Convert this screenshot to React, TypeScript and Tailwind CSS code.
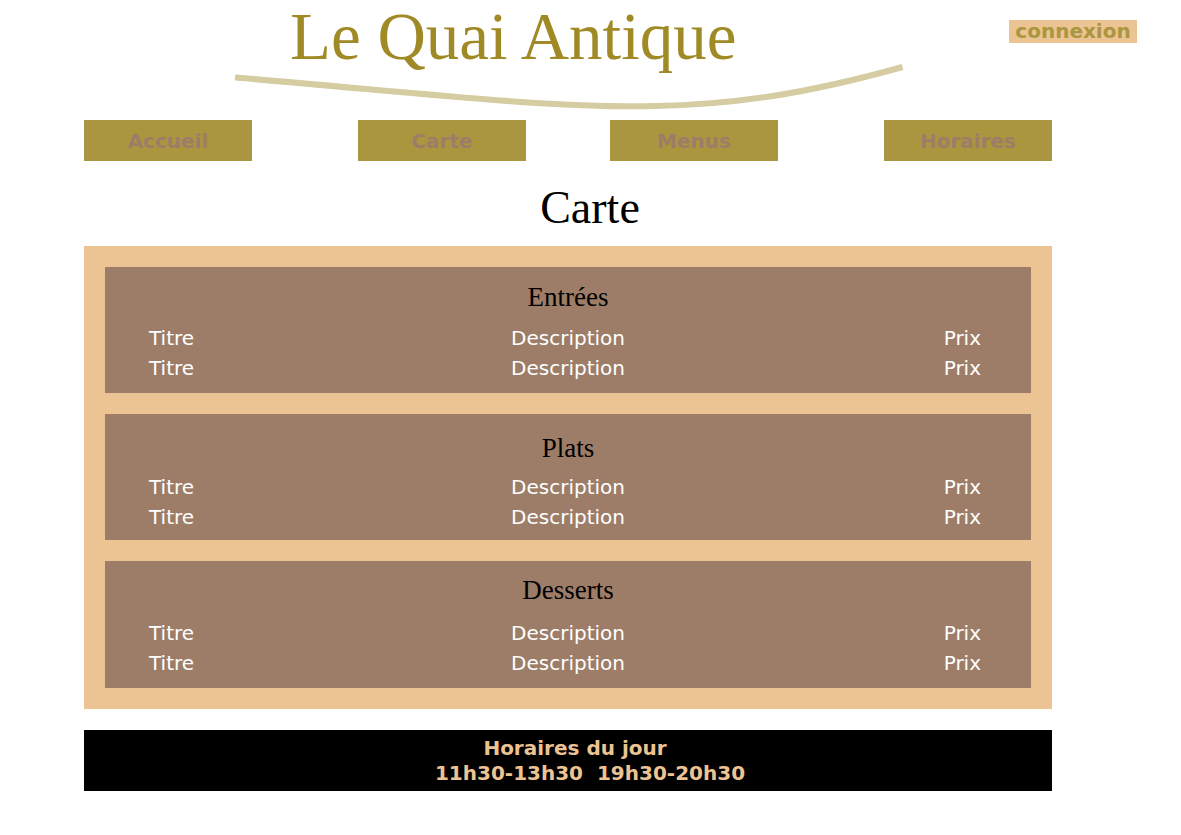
type Dish = { title: string; description: string; price: string };

type Section = {
  name: string;
  headingClass: string;
  bodyClass: string;
  dishes: Dish[];
};

const dish: Dish = { title: "Titre", description: "Description", price: "Prix" };

const sections: Section[] = [
  { name: "Entrées", headingClass: "pt-3.5 pb-2.5", bodyClass: "pb-2.5", dishes: [dish, dish] },
  { name: "Plats", headingClass: "pt-4.5 pb-2", bodyClass: "pb-2", dishes: [dish, dish] },
  { name: "Desserts", headingClass: "pt-[13px] pb-3", bodyClass: "pb-2.5", dishes: [dish, dish] },
];

const navGroups = [
  ["Accueil", "Carte"],
  ["Menus", "Horaires"],
];

const serif = "font-['Liberation_Serif',serif]";

function Header() {
  return (
    <header className="flex items-start pl-[129px] pr-[44px]">
      <div className="flex flex-1 justify-center">
        <div className="w-[668px]">
          <p className={`${serif} pl-[55px] text-[67px] leading-[72px] whitespace-nowrap text-[#a08a26]`}>
            Le Quai Antique
          </p>
          <svg
            className="-mt-3 block h-13 w-full overflow-visible"
            viewBox="0 0 668 52"
            fill="none"
            aria-hidden="true"
          >
            <path d="M0 17.5 C345 46.5 448 68.5 667.5 7" stroke="#d5cca1" strokeWidth="6" />
          </svg>
        </div>
      </div>
      <button
        type="button"
        className="mt-5 w-32 bg-[#ecc392] text-center text-[20px] leading-[23px] font-bold text-[#aa963f]"
      >
        connexion
      </button>
    </header>
  );
}

function Navigation() {
  return (
    <nav className="mt-2 flex justify-between">
      {navGroups.map((group) => (
        <div key={group[0]} className="flex gap-[106px]">
          {group.map((label) => (
            <a
              key={label}
              href={`#${label.toLowerCase()}`}
              className="w-[168px] bg-[#aa963f] pt-0.5 text-center text-[20px] leading-[39px] font-bold text-[#9d7d67]"
            >
              {label}
            </a>
          ))}
        </div>
      ))}
    </nav>
  );
}

function MenuSection({ section }: { section: Section }) {
  const id = `section-${section.name.toLowerCase()}`;
  return (
    <section className="bg-[#9d7d67] px-11">
      <h2
        id={id}
        className={`${serif} ${section.headingClass} text-center text-[27px] leading-8 text-black`}
      >
        {section.name}
      </h2>
      <div className={section.bodyClass}>
        <table
          aria-labelledby={id}
          className="w-full table-fixed border-collapse text-[20px] leading-[30px] text-white"
        >
          <tbody>
            {section.dishes.map((item, index) => (
              <tr key={index}>
                <td className="p-0 text-left">{item.title}</td>
                <td className="p-0 text-center">{item.description}</td>
                <td className="p-0 pr-1.5 text-right">{item.price}</td>
              </tr>
            ))}
          </tbody>
        </table>
      </div>
    </section>
  );
}

export default function App() {
  return (
    <div className="min-h-screen bg-white pb-10 font-['DejaVu_Sans',sans-serif]">
      <Header />
      <div className="pl-[84px] pr-[129px]">
        <Navigation />
        <main>
          <h1 className={`${serif} mt-[21px] pl-11 text-center text-[46px] leading-[52px] text-black`}>
            Carte
          </h1>
          <div className="mt-3 flex flex-col gap-[21px] bg-[#ecc392] p-[21px]">
            {sections.map((section) => (
              <MenuSection key={section.name} section={section} />
            ))}
          </div>
        </main>
        <footer className="mt-[21px] bg-black pt-1.5 pb-[5px] pl-11 text-center text-[20px] leading-[25px] font-bold text-[#ecc392]">
          <p className="pr-[30px]">Horaires du jour</p>
          <p className="whitespace-pre">11h30-13h30  19h30-20h30</p>
        </footer>
      </div>
    </div>
  );
}
